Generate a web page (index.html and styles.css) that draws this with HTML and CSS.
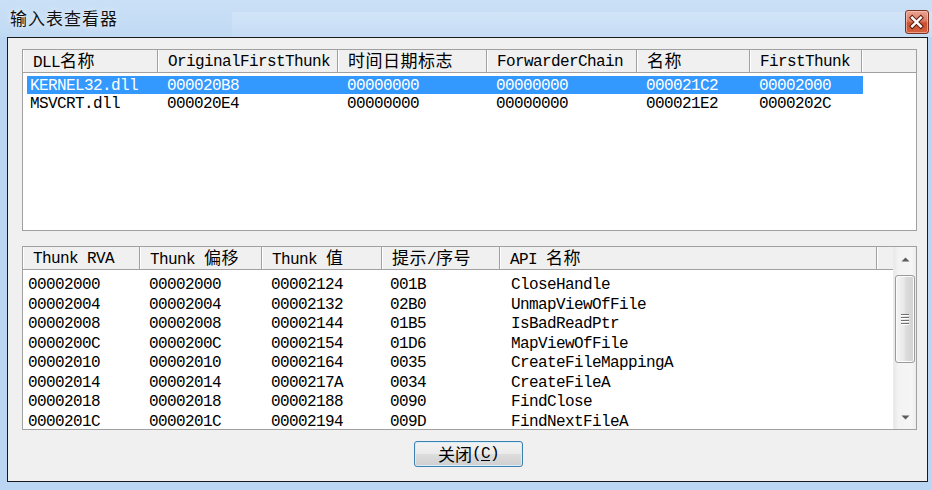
FILE: index.html
```html
<!DOCTYPE html>
<html lang="zh-CN">
<head>
<meta charset="utf-8">
<title>输入表查看器</title>
<link rel="stylesheet" href="styles.css">
</head>
<body>
<div class="screen">
  <div class="titlebar">
    <span class="title">输入表查看器</span>
    <div class="close" aria-label="关闭">
      <svg width="24" height="24" viewBox="0 0 24 24">
        <path d="M7.5 7.5 L16.5 16.5 M16.5 7.5 L7.5 16.5" stroke="#5a1a10" stroke-width="4.6" stroke-linecap="square" fill="none"/>
        <path d="M7.5 7.5 L16.5 16.5 M16.5 7.5 L7.5 16.5" stroke="#ffffff" stroke-width="2.6" stroke-linecap="square" fill="none"/>
      </svg>
    </div>
  </div>

  <div class="window">
    <div class="list list-top">
      <div class="header cols-top">
        <div class="hcell"><span class="htext">DLL<span class="cjk">名称</span></span></div>
        <div class="hcell"><span class="htext">OriginalFirstThunk</span></div>
        <div class="hcell"><span class="htext"><span class="cjk">时间日期标志</span></span></div>
        <div class="hcell"><span class="htext">ForwarderChain</span></div>
        <div class="hcell"><span class="htext"><span class="cjk">名称</span></span></div>
        <div class="hcell"><span class="htext">FirstThunk</span></div>
        <div class="hcell filler"></div>
      </div>
      <div class="rows rows-top">
        <div class="row row-top sel">
          <div class="cell first">KERNEL32.dll</div>
          <div class="cell">000020B8</div>
          <div class="cell">00000000</div>
          <div class="cell">00000000</div>
          <div class="cell">000021C2</div>
          <div class="cell">00002000</div>
        </div>
        <div class="row row-top">
          <div class="cell first">MSVCRT.dll</div>
          <div class="cell">000020E4</div>
          <div class="cell">00000000</div>
          <div class="cell">00000000</div>
          <div class="cell">000021E2</div>
          <div class="cell">0000202C</div>
        </div>
      </div>
    </div>

    <div class="list list-bottom">
      <div class="lb-main">
        <div class="header cols-bottom">
          <div class="hcell"><span class="htext">Thunk RVA</span></div>
          <div class="hcell"><span class="htext">Thunk <span class="cjk">偏移</span></span></div>
          <div class="hcell"><span class="htext">Thunk <span class="cjk">值</span></span></div>
          <div class="hcell"><span class="htext"><span class="cjk">提示</span>/<span class="cjk">序号</span></span></div>
          <div class="hcell"><span class="htext">API <span class="cjk">名称</span></span></div>
          <div class="hcell filler"></div>
        </div>
        <div class="rows rows-bottom">
          <div class="row row-bottom"><div class="cell first">00002000</div><div class="cell">00002000</div><div class="cell">00002124</div><div class="cell">001B</div><div class="cell">CloseHandle</div></div>
          <div class="row row-bottom"><div class="cell first">00002004</div><div class="cell">00002004</div><div class="cell">00002132</div><div class="cell">02B0</div><div class="cell">UnmapViewOfFile</div></div>
          <div class="row row-bottom"><div class="cell first">00002008</div><div class="cell">00002008</div><div class="cell">00002144</div><div class="cell">01B5</div><div class="cell">IsBadReadPtr</div></div>
          <div class="row row-bottom"><div class="cell first">0000200C</div><div class="cell">0000200C</div><div class="cell">00002154</div><div class="cell">01D6</div><div class="cell">MapViewOfFile</div></div>
          <div class="row row-bottom"><div class="cell first">00002010</div><div class="cell">00002010</div><div class="cell">00002164</div><div class="cell">0035</div><div class="cell">CreateFileMappingA</div></div>
          <div class="row row-bottom"><div class="cell first">00002014</div><div class="cell">00002014</div><div class="cell">0000217A</div><div class="cell">0034</div><div class="cell">CreateFileA</div></div>
          <div class="row row-bottom"><div class="cell first">00002018</div><div class="cell">00002018</div><div class="cell">00002188</div><div class="cell">0090</div><div class="cell">FindClose</div></div>
          <div class="row row-bottom"><div class="cell first">0000201C</div><div class="cell">0000201C</div><div class="cell">00002194</div><div class="cell">009D</div><div class="cell">FindNextFileA</div></div>
        </div>
      </div>
      <div class="vscroll">
        <div class="sb-btn">
          <svg width="9" height="5" viewBox="0 0 9 5"><path d="M0.5 4.5 L4.5 0.5 L8.5 4.5 Z" fill="#5b5b5b"/></svg>
        </div>
        <div class="sb-track">
          <div class="sb-thumb">
            <div class="grip"></div>
            <div class="grip"></div>
            <div class="grip"></div>
            <div class="grip"></div>
          </div>
        </div>
        <div class="sb-btn">
          <svg width="9" height="5" viewBox="0 0 9 5"><path d="M0.5 0.5 L4.5 4.5 L8.5 0.5 Z" fill="#5b5b5b"/></svg>
        </div>
      </div>
    </div>

    <div class="actions">
      <div class="btn"><span class="cjk">关闭</span><span class="mono">(<u>C</u>)</span></div>
    </div>
  </div>
</div>
</body>
</html>
```

FILE: styles.css
```css
* { box-sizing: border-box; }

html, body {
  margin: 0;
  padding: 0;
  background: #bad6f3;
}

.screen {
  width: 932px;
  height: 490px;
  overflow: hidden;
  background: #bad6f3;
  font-family: "Liberation Mono", "Noto Sans CJK SC", monospace;
  font-size: 16px;
  letter-spacing: -0.6px;
  color: #000;
}

.cjk {
  font-family: "Noto Sans CJK SC", sans-serif;
  font-size: 17px;
  letter-spacing: 0.5px;
  line-height: 18px;
}

.mono {
  font-family: "Liberation Mono", monospace;
  font-size: 16px;
  letter-spacing: -0.6px;
}

/* ---------- title bar ---------- */
.titlebar {
  height: 37px;
  display: flex;
  justify-content: space-between;
  align-items: flex-start;
  padding: 0 3px 0 10px;
  background:
    linear-gradient(180deg, rgba(214, 231, 249, 0.7), rgba(204, 223, 245, 0.4)) 232px 12px / 700px 25px no-repeat,
    linear-gradient(180deg, #cae0f6 0%, #c1daf4 100%);
}

.title {
  margin-top: 5px;
  font-family: "Noto Sans CJK SC", sans-serif;
  font-size: 17px;
  line-height: 26px;
  letter-spacing: 1px;
  color: #111;
  text-shadow: 0 0 6px rgba(255, 255, 255, 0.9);
}

.close {
  margin-top: 10px;
  width: 24px;
  height: 24px;
  border: 1px solid #7a3322;
  border-radius: 3px;
  background: linear-gradient(180deg, #eba592 0%, #dc7a62 45%, #c9502f 55%, #d4623f 100%);
  box-shadow: inset 0 0 0 1px rgba(255, 210, 200, 0.55);
  display: flex;
  align-items: center;
  justify-content: center;
}

.close svg { display: block; margin-left: -1px; margin-top: -1px; }

/* ---------- dialog ---------- */
.window {
  margin-left: 7px;
  width: 921px;
  height: 445px;
  border: 1px solid #1a1a1a;
  background: #f0f0f0;
  padding: 11px 10px 14px 14px;
  display: flex;
  flex-direction: column;
}

.list {
  width: 895px;
  border: 1px solid #a0a0a0;
  background: #ffffff;
}

.list-top { height: 182px; }

.list-bottom {
  height: 184px;
  margin-top: 15px;
  display: flex;
}

.lb-main {
  flex: 1;
  min-width: 0;
  display: flex;
  flex-direction: column;
}

/* header */
.header {
  display: flex;
  height: 23px;
  background: #f0f0f0;
  border-bottom: 1px solid #a0a0a0;
  flex-shrink: 0;
}

.hcell {
  display: flex;
  align-items: center;
  padding-left: 9px;
  border-left: 1px solid #ffffff;
  border-right: 1px solid #a0a0a0;
  white-space: nowrap;
}

.htext {
  line-height: 20px;
  padding-top: 1px;
}

.hcell.filler {
  flex: 1;
  border-right: none;
}

.cols-top .hcell:nth-child(1) { width: 135px; }
.cols-top .hcell:nth-child(2) { width: 180px; }
.cols-top .hcell:nth-child(3) { width: 149px; }
.cols-top .hcell:nth-child(4) { width: 150px; }
.cols-top .hcell:nth-child(5) { width: 113px; }
.cols-top .hcell:nth-child(6) { width: 112px; }
.cols-top .hcell.filler { flex: none; width: 52px; }

.cols-bottom .hcell:nth-child(1) { width: 117px; }
.cols-bottom .hcell:nth-child(2) { width: 122px; }
.cols-bottom .hcell:nth-child(3) { width: 120px; }
.cols-bottom .hcell:nth-child(4) { width: 118px; }
.cols-bottom .hcell:nth-child(5) { width: 377px; }

/* rows */
.rows-top { padding-top: 3px; }

.row {
  display: grid;
  white-space: nowrap;
}

.row-top {
  margin-left: 4px;
  width: 836px;
  height: 18px;
  line-height: 21px;
  grid-template-columns: 131px 180px 149px 150px 113px 112px;
}

.row.sel {
  background: #3399ff;
  color: #ffffff;
}

.rows-bottom {
  padding-top: 6px;
  flex: 1;
  min-height: 0;
  overflow: hidden;
}

.row-bottom {
  height: 19.5px;
  line-height: 19.5px;
  grid-template-columns: 117px 122px 120px 118px 377px;
}

.cell {
  padding-left: 9px;
  height: 100%;
}

.row-top .cell.first { padding-left: 3px; }
.row-bottom .cell.first { padding-left: 5px; }
.row-bottom .cell:nth-child(4) { padding-left: 8px; }
.row-bottom .cell:nth-child(5) { padding-left: 11px; }

/* scrollbar */
.vscroll {
  width: 23px;
  display: flex;
  flex-direction: column;
  background: linear-gradient(90deg, #e8e8e8 0%, #f3f3f3 20%, #f5f5f5 80%, #ececec 100%);
  border-left: 1px solid #ececec;
}

.sb-btn {
  height: 24px;
  display: flex;
  align-items: center;
  justify-content: center;
  flex-shrink: 0;
}

.sb-track {
  flex: 1;
  padding: 4px 1px 0 1px;
}

.sb-thumb {
  height: 88px;
  border: 1px solid #9b9b9b;
  border-radius: 3px;
  background: linear-gradient(90deg, #f4f4f4 0%, #e9e9e9 45%, #dcdcdc 55%, #d2d2d2 100%);
  box-shadow: inset 0 0 0 1px #fbfbfb;
  display: flex;
  flex-direction: column;
  align-items: center;
  justify-content: center;
  gap: 2px;
}

.grip {
  width: 8px;
  height: 1px;
  background: #6f6f6f;
  box-shadow: 0 1px 0 #ffffff;
}

/* button */
.actions {
  margin-top: 11px;
  display: flex;
  justify-content: center;
  padding-right: 2px;
}

.btn {
  width: 109px;
  height: 26px;
  border: 1px solid #3c7fb1;
  border-radius: 3px;
  background: linear-gradient(180deg, #f2f2f2 0%, #ebebeb 48%, #dddddd 52%, #cfcfcf 100%);
  box-shadow: inset 0 0 0 1px #d9ecf9;
  display: flex;
  align-items: center;
  justify-content: center;
  line-height: 18px;
}

.btn .cjk { letter-spacing: 0; }
.btn u { text-decoration-thickness: 1px; text-underline-offset: 2px; }
```
